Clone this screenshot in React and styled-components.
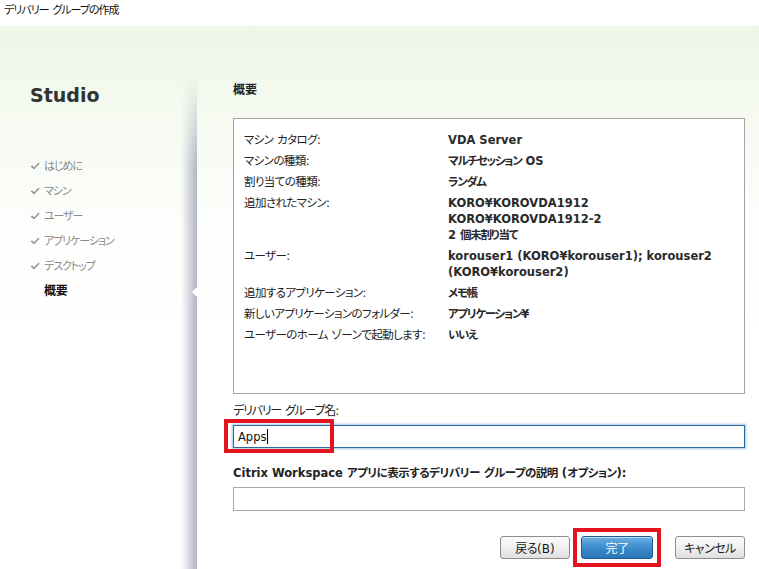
import styled, { createGlobalStyle } from "styled-components";

const GlobalStyle = createGlobalStyle`
  html, body {
    margin: 0;
    padding: 0;
    background: #ffffff;
  }
  * {
    box-sizing: border-box;
  }
`;

const ui = `"DejaVu Sans", "Noto Sans CJK JP", sans-serif`;

// Japanese runs get their own size / tracking, like the narrow UI font in the shot
const JP_RUN = /([\u3000-\u30ff\u4e00-\u9fff\uff00-\uffef]+)/;
const Jp = styled.span`
  font-size: var(--jp-fs, 1em);
  letter-spacing: var(--jp-ls, 0px);
`;
const t = (text) =>
  text.split(JP_RUN).map((part, i) => (i % 2 ? <Jp key={i}>{part}</Jp> : part));

const summary = [
  ["マシン カタログ:", ["VDA Server"]],
  ["マシンの種類:", ["マルチセッション OS"]],
  ["割り当ての種類:", ["ランダム"]],
  ["追加されたマシン:", ["KORO¥KOROVDA1912", "KORO¥KOROVDA1912-2", "2 個未割り当て"]],
  ["ユーザー:", ["korouser1 (KORO¥korouser1); korouser2", "(KORO¥korouser2)"]],
  ["追加するアプリケーション:", ["メモ帳"]],
  ["新しいアプリケーションのフォルダー:", ["アプリケーション¥"]],
  ["ユーザーのホーム ゾーンで起動します:", ["いいえ"]],
];

const steps = ["はじめに", "マシン", "ユーザー", "アプリケーション", "デスクトップ"];

const CheckIcon = () => (
  <CheckMark viewBox="0 0 10 9" aria-hidden="true">
    <path d="M0.6 4.6 L2.2 3.3 L4 5.2 L8.6 0.6 L9.6 1.7 L4 7.6 Z" />
  </CheckMark>
);

export default function App() {
  return (
    <>
      <GlobalStyle />
      <Window>
        <TitleBar>{t("デリバリー グループの作成")}</TitleBar>
        <Body>
          <Sidebar>
            <Brand>Studio</Brand>
            <StepList>
              {steps.map((s) => (
                <Step key={s}>
                  <CheckIcon />
                  {t(s)}
                </Step>
              ))}
              <Step $active>{t("概要")}</Step>
            </StepList>
          </Sidebar>
          <Main>
            <PageTitle>{t("概要")}</PageTitle>
            <SummaryBox>
              {summary.map(([label, values]) => (
                <SummaryRow key={label}>
                  <RowLabel>{t(label)}</RowLabel>
                  <RowValue>
                    {values.map((v) => (
                      <div key={v}>{t(v)}</div>
                    ))}
                  </RowValue>
                </SummaryRow>
              ))}
            </SummaryBox>

            <FieldLabel $gap={9}>{t("デリバリー グループ名:")}</FieldLabel>
            <Highlight $inset="-6px auto -5px -9px" $width={102}>
              <TextField $focused>
                Apps<Caret />
              </TextField>
            </Highlight>

            <FieldLabel $gap={17} $bold>
              {t("Citrix Workspace アプリに表示するデリバリー グループの説明 (オプション):")}
            </FieldLabel>
            <TextField />

            <ButtonBar>
              <Button>{t("戻る")}(B)</Button>
              <Highlight $inset="-8px -8px -8px -8px">
                <Button $primary>{t("完了")}</Button>
              </Highlight>
              <Button $spaced>{t("キャンセル")}</Button>
            </ButtonBar>
          </Main>
        </Body>
      </Window>
    </>
  );
}

const Window = styled.div`
  width: 759px;
  height: 569px;
  display: flex;
  flex-direction: column;
  overflow: hidden;
  font-family: ${ui};
  font-feature-settings: "palt";
  color: #1e1e1e;
`;

const TitleBar = styled.div`
  --jp-fs: 11px;
  --jp-ls: -1px;
  height: 26px;
  padding: 3px 0 0 4px;
  font-size: 12px;
  line-height: 14px;
  background: #ffffff;
  color: #111;
`;

const Body = styled.div`
  flex: 1;
  display: flex;
  background: linear-gradient(to bottom, #eef6e6 0%, #f6faf1 90px, #fdfefc 200px, #ffffff 320px);
`;

const Sidebar = styled.div`
  position: relative;
  width: 197px;
  padding: 57px 0 0 30px;

  &::after {
    content: "";
    position: absolute;
    top: 50px;
    right: 0;
    bottom: 0;
    width: 16px;
    background: linear-gradient(to right, rgba(215, 218, 226, 0), rgba(172, 177, 192, 0.95));
    -webkit-mask-image: linear-gradient(to bottom, transparent 0, #000 90px);
    mask-image: linear-gradient(to bottom, transparent 0, #000 90px);
  }
`;

const Brand = styled.div`
  font-weight: bold;
  font-size: 19px;
  line-height: 24px;
  color: #2f3331;
`;

const StepList = styled.div`
  margin-top: 47px;
  display: flex;
  flex-direction: column;
`;

const Step = styled.div`
  --jp-fs: ${(p) => (p.$active ? "12px" : "11px")};
  --jp-ls: ${(p) => (p.$active ? "-0.3px" : "-1.1px")};
  position: relative;
  height: 25px;
  line-height: 25px;
  display: flex;
  align-items: center;
  font-size: 12px;
  color: ${(p) => (p.$active ? "#111" : "#8a8a8a")};
  font-weight: ${(p) => (p.$active ? "bold" : "normal")};
  padding-left: ${(p) => (p.$active ? "14px" : "0")};

  &::after {
    content: "";
    display: ${(p) => (p.$active ? "block" : "none")};
    position: absolute;
    right: 0;
    top: 8px;
    border-right: 5px solid #ffffff;
    border-top: 5px solid transparent;
    border-bottom: 5px solid transparent;
    z-index: 2;
  }
`;

const CheckMark = styled.svg`
  width: 10px;
  height: 9px;
  margin-right: 4px;
  fill: #999999;
  flex-shrink: 0;
`;

const Main = styled.div`
  flex: 1;
  display: flex;
  flex-direction: column;
  padding: 56px 14px 0 36px;
`;

const PageTitle = styled.div`
  font-size: 12px;
  line-height: 16px;
  font-weight: bold;
  color: #222;
  margin-bottom: 20px;
`;

const SummaryBox = styled.div`
  height: 276px;
  border: 1px solid #a3a3a3;
  background: #ffffff;
  padding: 13px 10px 0 10px;
  display: flex;
  flex-direction: column;
  gap: 5px;
`;

const SummaryRow = styled.div`
  display: flex;
  font-size: 11.5px;
  line-height: 16px;
`;

const RowLabel = styled.div`
  --jp-ls: -0.6px;
  width: 204px;
  flex-shrink: 0;
  color: #222;
`;

const RowValue = styled.div`
  --jp-ls: -1.3px;
  font-weight: bold;
  color: #2a2a2a;
`;

const FieldLabel = styled.div`
  --jp-ls: ${(p) => (p.$bold ? "-0.5px" : "-1.2px")};
  margin-top: ${(p) => p.$gap}px;
  margin-bottom: 6px;
  font-size: ${(p) => (p.$bold ? "11.5px" : "12px")};
  line-height: 16px;
  font-weight: ${(p) => (p.$bold ? "bold" : "normal")};
  color: #222;
`;

const Highlight = styled.div`
  position: relative;

  &::before {
    content: "";
    position: absolute;
    inset: ${(p) => p.$inset};
    width: ${(p) => (p.$width ? `${p.$width}px` : "auto")};
    border: 4px solid #e3141f;
    z-index: 3;
    pointer-events: none;
  }
`;

const TextField = styled.div`
  height: ${(p) => (p.$focused ? 23 : 24)}px;
  border: 1px solid ${(p) => (p.$focused ? "#2a6aa0" : "#a9a9a9")};
  box-shadow: ${(p) => (p.$focused ? "0 0 2px 1px rgba(90, 150, 210, 0.55)" : "none")};
  background: #ffffff;
  padding: 0 4px;
  display: flex;
  align-items: center;
  font-size: 11.5px;
  color: #111;
`;

const Caret = styled.span`
  display: inline-block;
  width: 1px;
  height: 15px;
  background: #000;
  margin-left: 1px;
`;

const ButtonBar = styled.div`
  margin-top: 25px;
  display: flex;
  justify-content: flex-end;
  gap: 11px;
`;

const Button = styled.button`
  --jp-ls: -0.5px;
  width: ${(p) => (p.$primary ? 72 : 70)}px;
  height: 23px;
  margin-left: ${(p) => (p.$spaced ? "11px" : "0")};
  border-radius: 3px;
  border: 1px solid ${(p) => (p.$primary ? "#1d5d97" : "#8d8d8d")};
  background: ${(p) =>
    p.$primary
      ? "linear-gradient(to bottom, #6db0e4 0%, #3e8ccc 50%, #2b76b7 100%)"
      : "linear-gradient(to bottom, #fbfbfb 0%, #f0f0f0 50%, #dfdfdf 100%)"};
  color: ${(p) => (p.$primary ? "#ffffff" : "#1a1a1a")};
  font-family: ${ui};
  font-feature-settings: "palt";
  font-size: 12px;
  padding: 0;
  box-shadow: inset 0 1px 0 rgba(255, 255, 255, 0.6);
`;
